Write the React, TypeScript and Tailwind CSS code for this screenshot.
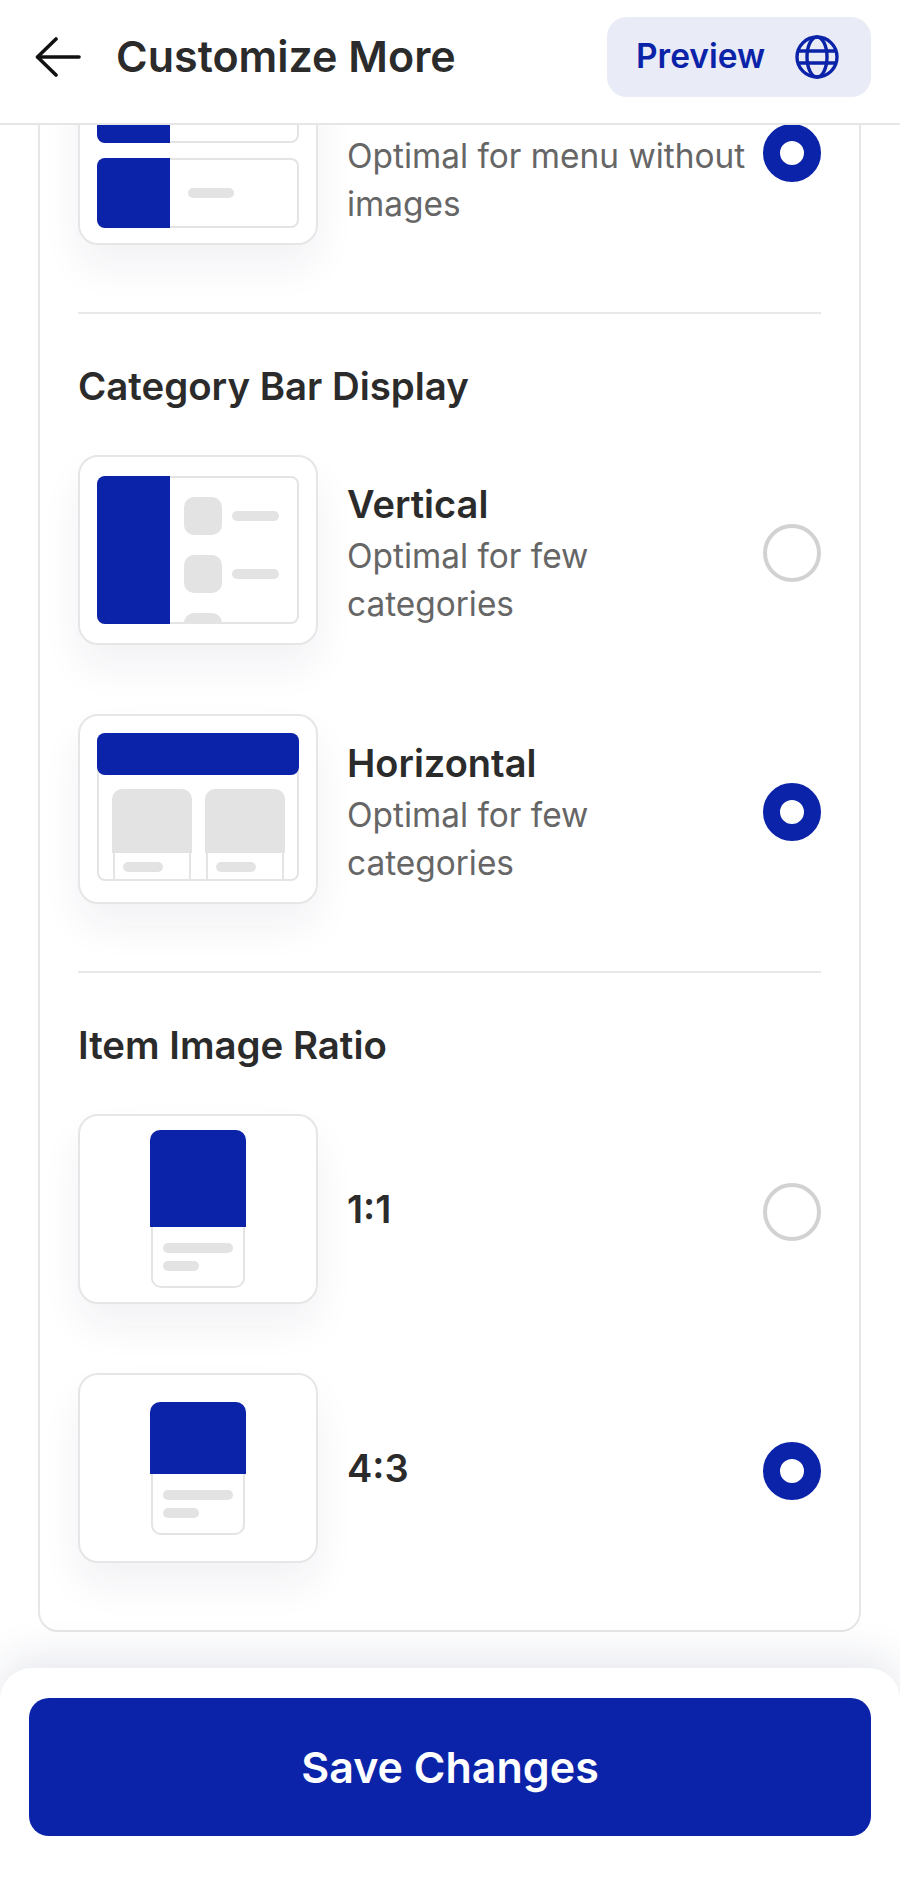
import React from 'react';

const BLUE = 'bg-[#0b23a8]';

const BackIcon = () => (
    <svg width="46" height="40" viewBox="0 0 46 40" fill="none" stroke="#111111" strokeWidth="3.6" strokeLinecap="round" strokeLinejoin="round">
        <path d="M44 20H3" />
        <path d="M21 2 2.5 20 21 38" />
    </svg>
);

const GlobeIcon = () => (
    <svg width="44" height="44" viewBox="0 0 44 44" fill="none" stroke="#0b23a8" strokeWidth="3.4">
        <circle cx="22" cy="22" r="20" />
        <ellipse cx="22" cy="22" rx="10" ry="20" />
        <path d="M4 16h36M4 28h36" />
    </svg>
);

const Radio = ({ selected }: { selected: boolean }) =>
    selected ? (
        <div className="w-[58px] h-[58px] mt-[6px] rounded-full border-[17px] border-[#0b23a8] bg-white shrink-0" />
    ) : (
        <div className="w-[58px] h-[58px] mt-[6px] rounded-full border-[4px] border-[#d2d2d2] bg-white shrink-0" />
    );

const Bar = ({ className }: { className: string }) => (
    <div className={`rounded-full bg-[#e3e3e3] ${className}`} />
);

// Thumbnails
const ListThumb = () => (
    <div className="flex flex-col gap-[15px]">
        {[0, 1].map(i => (
            <div key={i} className="flex w-[202px] h-[70px] rounded-[8px] border-2 border-[#e4e4e4] bg-white">
                <div className={`w-[73px] -my-[2px] -ml-[2px] rounded-l-[8px] ${BLUE}`} />
                <div className="flex-1 flex items-center pl-[18px]">
                    <Bar className="w-[46px] h-[10px]" />
                </div>
            </div>
        ))}
    </div>
);

const VerticalThumb = () => (
    <div className="flex w-[202px] h-[148px] rounded-[8px] border-2 border-[#e4e4e4] bg-white">
        <div className={`w-[73px] shrink-0 -my-[2px] -ml-[2px] rounded-l-[8px] ${BLUE}`} />
        <div className="flex-1 overflow-hidden flex flex-col gap-[20px] pl-[14px] pt-[19px]">
            {[0, 1, 2].map(i => (
                <div key={i} className="flex items-center gap-[10px]">
                    <div className="w-[38px] h-[38px] shrink-0 rounded-[10px] bg-[#e3e3e3]" />
                    {i < 2 && <Bar className="w-[47px] h-[10px]" />}
                </div>
            ))}
        </div>
    </div>
);

const HorizontalThumb = () => (
    <div className="w-[202px] h-[148px] -mt-[4px] rounded-[8px] border-2 border-[#e4e4e4] border-t-0 bg-white">
        <div className={`h-[42px] -mx-[2px] rounded-[8px] ${BLUE}`} />
        <div className="flex gap-[13px] pl-[13px] pt-[14px]">
            {[0, 1].map(i => (
                <div key={i} className="w-[80px]">
                    <div className="h-[64px] rounded-t-[10px] bg-[#e3e3e3]" />
                    <div className="h-[26px] mx-[1px] border-x-2 border-[#e4e4e4] pl-[8px] pt-[9px]">
                        <Bar className="w-[40px] h-[10px]" />
                    </div>
                </div>
            ))}
        </div>
    </div>
);

const RatioThumb = ({ imageHeight }: { imageHeight: string }) => (
    <div className="w-[96px] flex flex-col">
        <div className={`${imageHeight} rounded-t-[10px] ${BLUE}`} />
        <div className="h-[61px] mx-[1px] rounded-b-[10px] border-2 border-t-0 border-[#e4e4e4] bg-white pl-[10px] pt-[16px] flex flex-col gap-[8px]">
            <Bar className="w-[70px] h-[10px]" />
            <Bar className="w-[36px] h-[10px]" />
        </div>
    </div>
);

const OptionRow = ({
    thumb,
    title,
    description,
    selected
}: {
    thumb: React.ReactNode;
    title?: string;
    description?: string;
    selected: boolean;
}) => (
    <div className="flex items-center">
        <div className="w-[240px] h-[190px] shrink-0 rounded-[20px] border-2 border-[#e6e6e6] bg-white shadow-[0_22px_40px_rgba(30,40,90,0.06)] flex items-center justify-center">
            {thumb}
        </div>
        <div className={`flex-1 pl-[29px] ${description ? 'pt-[8px]' : ''}`}>
            {title ? (
                <div className={`text-[38px] leading-[48px] font-semibold text-[#2b2b2b] ${description ? 'mb-[4px]' : ''}`}>{title}</div>
            ) : (
                // title of this row has scrolled away under the header
                <div className="h-[52px]" />
            )}
            {description && (
                <div className="max-w-[408px] text-[33.4px] leading-[48px] text-[#666666]">{description}</div>
            )}
        </div>
        <Radio selected={selected} />
    </div>
);

export default function App() {
    return (
        <div className="relative flex flex-col w-[900px] h-[1893px] overflow-hidden bg-white font-['Inter',sans-serif]">
            {/* Header */}
            <header className="relative z-10 h-[125px] shrink-0 flex items-center justify-between pl-[35px] pr-[29px] pb-[10px] bg-white border-b-2 border-[#e6e6e6]">
                <div className="flex items-center gap-[35px]">
                    <BackIcon />
                    <h1 className="text-[43px] font-semibold text-[#2b2b2b]">Customize More</h1>
                </div>
                <button className="flex items-center justify-between w-[264px] h-[80px] pl-[29px] pr-[32px] rounded-[20px] bg-[#e9ebf6]">
                    <span className="text-[33.5px] font-semibold text-[#0b23a8]">Preview</span>
                    <GlobeIcon />
                </button>
            </header>

            {/* Scrolled content */}
            <main className="flex-1 min-h-0 overflow-hidden pl-[38px] pr-[39px]">
                <div className="-mt-[72px] pb-[67px] px-[38px] rounded-b-[20px] border-2 border-[#e6e6e6]">
                    <OptionRow
                        thumb={<ListThumb />}
                        description="Optimal for menu without images"
                        selected
                    />

                    <div className="mt-[67px] border-t-2 border-[#e8e8e8]" />

                    <h2 className="mt-[48px] mb-[45px] text-[38.4px] leading-[48px] font-semibold text-[#2b2b2b]">Category Bar Display</h2>
                    <div className="flex flex-col gap-[69px]">
                        <OptionRow thumb={<VerticalThumb />} title="Vertical" description="Optimal for few categories" selected={false} />
                        <OptionRow thumb={<HorizontalThumb />} title="Horizontal" description="Optimal for few categories" selected />
                    </div>

                    <div className="mt-[67px] border-t-2 border-[#e8e8e8]" />

                    <h2 className="mt-[48px] mb-[45px] text-[38.4px] leading-[48px] font-semibold text-[#2b2b2b]">Item Image Ratio</h2>
                    <div className="flex flex-col gap-[69px]">
                        <OptionRow thumb={<RatioThumb imageHeight="h-[97px]" />} title="1:1" selected={false} />
                        <OptionRow thumb={<RatioThumb imageHeight="h-[72px]" />} title="4:3" selected />
                    </div>
                </div>
            </main>

            {/* Save bar */}
            <footer className="relative z-10 h-[225px] shrink-0 px-[29px] pt-[30px] rounded-t-[32px] bg-white shadow-[0_-12px_40px_rgba(30,40,90,0.1)]">
                <button className={`w-full h-[138px] rounded-[20px] ${BLUE} text-[43px] font-semibold text-white`}>
                    Save Changes
                </button>
            </footer>
        </div>
    );
}
